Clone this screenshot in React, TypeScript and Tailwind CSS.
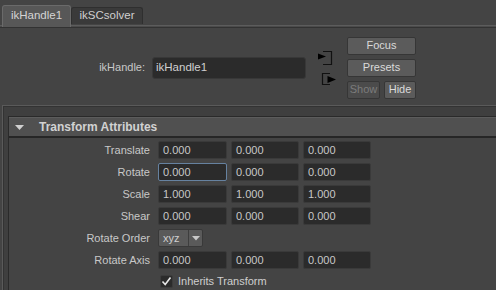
import React from "react";

const Field = ({ v, w, focus }: { v: string; w: string; focus?: boolean }) => (
  <div
    className={`${w} h-[18px] rounded-[2px] bg-[#2b2b2b] border ${
      focus ? "border-[#6682a0]" : "border-[#3a3a3a]"
    } flex items-center pl-[4px] text-[#c8c8c8]`}
  >
    {v}
  </div>
);

const Row = ({ label, vals, focus }: { label: string; vals: string[]; focus?: boolean }) => (
  <div className="flex items-center h-[18px]">
    <div className="w-[141px] text-right pr-0">{label}</div>
    <div className="ml-[8px] flex gap-[4px]">
      <Field v={vals[0]} w="w-[69px]" focus={focus} />
      <Field v={vals[1]} w="w-[68px]" />
      <Field v={vals[2]} w="w-[68px]" />
    </div>
  </div>
);

export default function App() {
  return (
    <div className="w-[496px] h-[290px] overflow-hidden bg-[#444444] text-[11px] leading-none text-[#c8c8c8] font-['Liberation_Sans',Arial,sans-serif]">
      {/* tabs */}
      <div className="relative h-[25px] flex items-end pl-[2px]">
        <div className="relative z-10 w-[69px] h-[22px] -mb-[2px] rounded-t-[3px] bg-[#575757] border-t border-l border-r border-[#6a6a6a] flex items-center justify-center pb-[2px] text-[#d4d4d4] text-[11.5px]">
          ikHandle1
        </div>
        <div className="w-[72px] h-[17px] mb-[1px] rounded-t-[3px] bg-[#3a3a3a] border-t border-l border-r border-[#2f2f2f] flex items-center justify-center text-[#cfcfcf] text-[11.5px]">
          ikSCsolver
        </div>
      </div>
      <div className="h-[3px] border-t border-[#5c5c5c] bg-[#4b4b4b] border-b border-b-[#323232]" />

      {/* upper panel */}
      <div className="h-[77px] flex items-center pt-[2px]">
        <div className="w-[145px] text-right">ikHandle:</div>
        <div className="ml-[7px] w-[154px] h-[22px] rounded-[3px] bg-[#2b2b2b] border border-[#383838] flex items-center pl-[3px] text-[#d0d0d0] text-[11.5px]">
          ikHandle1
        </div>
        <svg className="ml-[12px]" width="18" height="34" viewBox="0 0 18 34">
          <path d="M5 0.5 H13.5 V13.5 H5" fill="none" stroke="#111" strokeWidth="1.2" />
          <polygon points="0,2.5 8,5.5 0,8.5" fill="#000" />
          <path d="M12 22.5 H4.5 V33.5 H12" fill="none" stroke="#111" strokeWidth="1.2" />
          <polygon points="9.5,25 18,28.5 9.5,32" fill="#000" />
        </svg>
        <div className="ml-[11px] w-[69px] flex flex-col gap-[4px]">
          <div className="h-[18px] rounded-[2px] bg-[#5b5b5b] border border-[#363636] flex items-center justify-center text-[#dadada]">
            Focus
          </div>
          <div className="h-[18px] rounded-[2px] bg-[#5b5b5b] border border-[#363636] flex items-center justify-center text-[#dadada]">
            Presets
          </div>
          <div className="flex gap-[4px]">
            <div className="w-[33px] h-[18px] rounded-[2px] bg-[#4b4b4b] border border-[#363636] flex items-center justify-center text-[#7c7c7c]">
              Show
            </div>
            <div className="w-[32px] h-[18px] rounded-[2px] bg-[#5b5b5b] border border-[#363636] flex items-center justify-center text-[#dadada]">
              Hide
            </div>
          </div>
        </div>
      </div>

      {/* lower frame */}
      <div className="ml-[2px] border-t border-l border-[#5a5a5a] h-[200px]">
        <div className="border-t border-l border-[#333333] bg-[#3f3f3f] h-full pl-[4px] pt-[9px]">
          <div className="border border-[#2a2a2a] border-r-0 h-full bg-[#444444]">
            <div className="h-[19px] bg-[#505050] border-t border-[#5c5c5c] flex items-center">
              <svg className="ml-[6px]" width="9" height="5" viewBox="0 0 9 5">
                <polygon points="0,0 9,0 4.5,5" fill="#d0d0d0" />
              </svg>
              <span className="ml-[15px] font-bold text-[12px] text-[#d2d2d2]">Transform Attributes</span>
            </div>
            <div className="h-[2px] bg-[#262626]" />
            <div className="pt-[3px] flex flex-col gap-[4px]">
              <Row label="Translate" vals={["0.000", "0.000", "0.000"]} />
              <Row label="Rotate" vals={["0.000", "0.000", "0.000"]} focus />
              <Row label="Scale" vals={["1.000", "1.000", "1.000"]} />
              <Row label="Shear" vals={["0.000", "0.000", "0.000"]} />
              <div className="flex items-center h-[18px]">
                <div className="w-[141px] text-right">Rotate Order</div>
                <div className="ml-[8px] w-[45px] h-[18px] rounded-[2px] bg-[#5a5a5a] border border-[#393939] flex items-center">
                  <span className="pl-[4px] w-[29px] text-[#cfcfcf]">xyz</span>
                  <div className="w-[1px] h-full bg-[#3e3e3e]" />
                  <svg className="ml-[3px]" width="8" height="5" viewBox="0 0 8 5">
                    <polygon points="0,0 8,0 4,4.5" fill="#c8c8c8" />
                  </svg>
                </div>
              </div>
              <Row label="Rotate Axis" vals={["0.000", "0.000", "0.000"]} />
              <div className="flex items-center h-[14px] mt-[1px]">
                <div className="ml-[151px] w-[13px] h-[13px] rounded-[2px] bg-[#2b2b2b] border border-[#3c3c3c] flex items-center justify-center">
                  <svg width="11" height="11" viewBox="0 0 11 11">
                    <path d="M1.5 5.5 L4.2 8.5 L9.5 1.5" fill="none" stroke="#e6e6e6" strokeWidth="1.6" />
                  </svg>
                </div>
                <span className="ml-[5px] text-[#cfcfcf]">Inherits Transform</span>
              </div>
            </div>
          </div>
        </div>
      </div>
    </div>
  );
}
